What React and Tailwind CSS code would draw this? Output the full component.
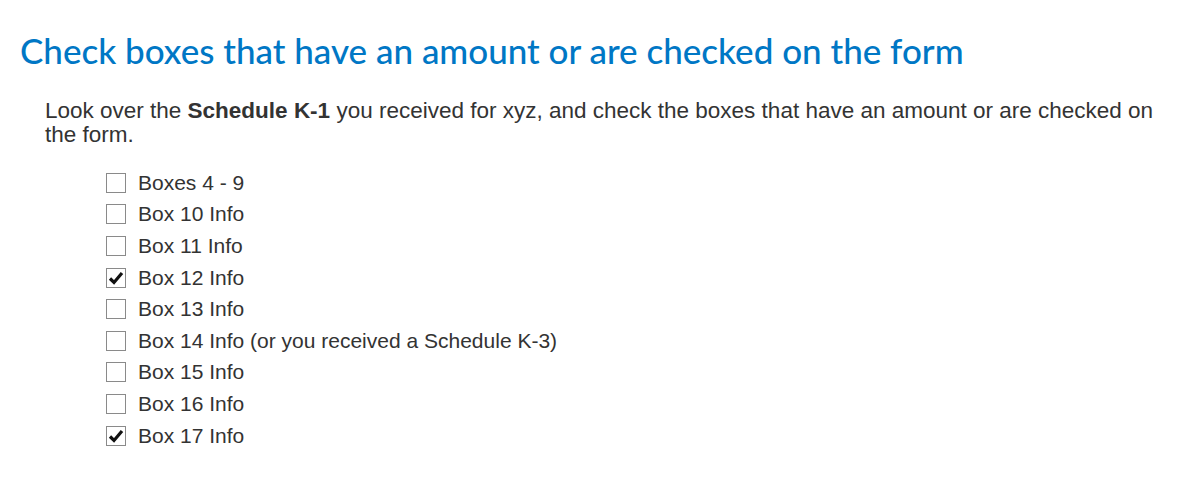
import React from "react";

const items = [
  { label: "Boxes 4 - 9", checked: false },
  { label: "Box 10 Info", checked: false },
  { label: "Box 11 Info", checked: false },
  { label: "Box 12 Info", checked: true },
  { label: "Box 13 Info", checked: false },
  { label: "Box 14 Info (or you received a Schedule K-3)", checked: false },
  { label: "Box 15 Info", checked: false },
  { label: "Box 16 Info", checked: false },
  { label: "Box 17 Info", checked: true },
];

function CheckBox({ checked }) {
  return (
    <span className="w-[20px] h-[20px] border-[1.5px] border-[#8a8a8a] bg-white flex items-center justify-center shrink-0">
      {checked && (
        <svg width="16" height="16" viewBox="0 0 16 16">
          <path d="M2 8.5 L6 12.5 L14 3" fill="none" stroke="#111" strokeWidth="3.2" />
        </svg>
      )}
    </span>
  );
}

export default function App() {
  return (
    <div className="bg-white w-[1192px] h-[501px] pl-[20px] pt-[30px]">
      {/* Heading */}
      <h1 className="text-[35px] leading-[40px] text-[#0077c5] font-['Lato',sans-serif] font-medium">
        Check boxes that have an amount or are checked on the form
      </h1>

      <div className="pl-[25px] pt-[29px] pr-[20px] font-['Liberation_Sans',Arial,sans-serif] text-[#333]">
        <p className="text-[22.5px] leading-[24px]">
          Look over the <span className="font-bold">Schedule K-1</span> you received for xyz, and check the boxes that have an amount or are checked on the form.
        </p>

        {/* Checkbox list */}
        <ul className="mt-[20px] pl-[61px] flex flex-col">
          {items.map((item) => (
            <li key={item.label} className="flex items-center gap-[12px] h-[31.6px]">
              <CheckBox checked={item.checked} />
              <span className="text-[21px] leading-[24px]">{item.label}</span>
            </li>
          ))}
        </ul>
      </div>
    </div>
  );
}
